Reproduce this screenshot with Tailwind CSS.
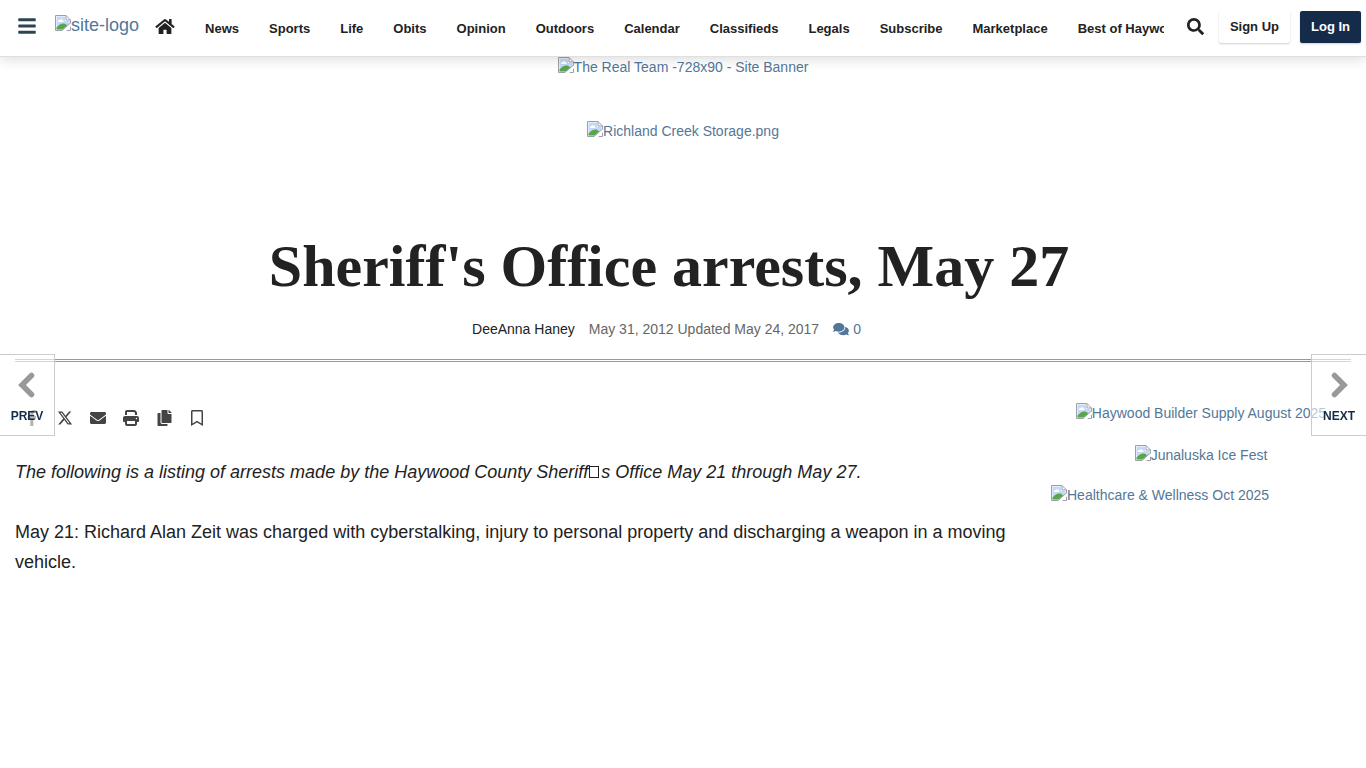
<!DOCTYPE html>
<html lang="en">

<head>
  <meta charset="UTF-8" />
  <meta name="viewport" content="width=device-width, initial-scale=1.0" />
  <title>Sheriff's Office arrests, May 27</title>
  <script src="https://cdn.jsdelivr.net/npm/@tailwindcss/browser@4"></script>
</head>

<body class="bg-white text-[#222] text-sm leading-5 font-['Liberation_Sans',Arial,sans-serif]">

  <!-- Placeholder icon shared by the logo and the ads -->
  <svg class="hidden">
    <symbol id="placeholder" viewBox="0 0 16 16">
      <path d="M.5.5H11L15.5 5v10.500H.5z" fill="#fff" />
      <path d="M1.500 1.500H10V6h4.500v3L8.500 14.500h-7z" fill="#c6d8f8" />
      <path d="M3 7a1.500 1.500 0 0 1 1.500-2A2 2 0 0 1 8 5.500 1.300 1.300 0 0 1 8.500 7z" fill="#fff" />
      <path d="M1.500 14.500v-2C4 10 6 8.500 8 8.500s3 .5 4 2L7.500 14.500z" fill="#55a845" />
      <path d="M7 15.500 15.500 8M.5 15.500V.5H11L15.500 5v3.500M11 .5V5h4.500M.5 15.500H7M11.500 15.500h4V11.500" fill="none" stroke="#9a9fa8" />
      <path d="M8 16 16 8.500V11l-5 5z" fill="#fff" />
    </symbol>
  </svg>

  <!-- Header -->
  <header class="relative z-20 flex items-start h-[57px] bg-white border-b border-[#e0e0e0] shadow-[0_2px_12px_rgba(0,0,0,0.15)]">
    <button type="button" aria-label="Menu" class="ml-[18px] mt-4 shrink-0">
      <svg class="w-[18px] h-5" viewBox="0 0 448 512" fill="#2c4453"><path d="M16 132h416c8.837 0 16-7.163 16-16V76c0-8.837-7.163-16-16-16H16C7.163 60 0 67.163 0 76v40c0 8.837 7.163 16 16 16zm0 160h416c8.837 0 16-7.163 16-16v-40c0-8.837-7.163-16-16-16H16c-8.837 0-16 7.163-16 16v40c0 8.837 7.163 16 16 16zm0 160h416c8.837 0 16-7.163 16-16v-40c0-8.837-7.163-16-16-16H16c-8.837 0-16 7.163-16 16v40c0 8.837 7.163 16 16 16z" /></svg>
    </button>
    <a href="#" class="flex ml-[19px] mt-[15px] shrink-0 text-lg leading-5 text-[#537799]">
      <svg class="w-4 h-4"><use href="#placeholder" /></svg>site-logo
    </a>
    <a href="#" aria-label="Home" class="ml-4 mt-[18px] shrink-0">
      <svg class="w-5 h-[17px]" viewBox="0 0 576 512" fill="#222"><path d="M280.37 148.26L96 300.11V464a16 16 0 0 0 16 16l112.06-.29a16 16 0 0 0 15.92-16V368a16 16 0 0 1 16-16h64a16 16 0 0 1 16 16v95.64a16 16 0 0 0 16 16.05L464 480a16 16 0 0 0 16-16V300L295.67 148.26a12.19 12.19 0 0 0-15.3 0zM571.6 251.47L488 182.56V44.05a12 12 0 0 0-12-12h-56a12 12 0 0 0-12 12v72.61L318.47 43a48 48 0 0 0-61 0L4.34 251.47a12 12 0 0 0-1.6 16.9l25.5 31A12 12 0 0 0 45.15 301l235.22-193.74a12.19 12.19 0 0 1 15.3 0L530.9 301a12 12 0 0 0 16.9-1.6l25.5-31a12 12 0 0 0-1.7-16.93z" /></svg>
    </a>
    <nav class="flex-1 min-w-0 ml-[15px] mt-[19px] overflow-hidden">
      <ul class="flex text-[13px] font-bold whitespace-nowrap">
        <li><a href="#" class="block px-[15px]">News</a></li>
        <li><a href="#" class="block px-[15px]">Sports</a></li>
        <li><a href="#" class="block px-[15px]">Life</a></li>
        <li><a href="#" class="block px-[15px]">Obits</a></li>
        <li><a href="#" class="block px-[15px]">Opinion</a></li>
        <li><a href="#" class="block px-[15px]">Outdoors</a></li>
        <li><a href="#" class="block px-[15px]">Calendar</a></li>
        <li><a href="#" class="block px-[15px]">Classifieds</a></li>
        <li><a href="#" class="block px-[15px]">Legals</a></li>
        <li><a href="#" class="block px-[15px]">Subscribe</a></li>
        <li><a href="#" class="block px-[15px]">Marketplace</a></li>
        <li><a href="#" class="block px-[15px]">Best of Haywood</a></li>
      </ul>
    </nav>
    <button type="button" aria-label="Search" class="ml-[23px] mt-[18px] shrink-0">
      <svg class="w-[17px] h-[17px]" viewBox="0 0 512 512" fill="#222"><path d="M505 442.7L405.3 343c-4.5-4.5-10.6-7-17-7H372c27.6-35.3 44-79.7 44-128C416 93.1 322.9 0 208 0S0 93.1 0 208s93.1 208 208 208c48.3 0 92.7-16.4 128-44v16.3c0 6.4 2.5 12.5 7 17l99.7 99.7c9.4 9.4 24.6 9.4 33.9 0l28.3-28.3c9.4-9.4 9.4-24.6.1-34zM208 336c-70.7 0-128-57.2-128-128 0-70.7 57.2-128 128-128 70.7 0 128 57.2 128 128 0 70.7-57.2 128-128 128z" /></svg>
    </button>
    <div class="flex gap-[10px] ml-[15px] mr-[5px] mt-[11px] shrink-0 text-[13px] font-bold">
      <a href="#" class="h-8 px-[11px] leading-8 rounded-xs bg-white shadow-[0_1px_2px_rgba(0,0,0,0.2)]">Sign Up</a>
      <a href="#" class="h-8 px-[11px] leading-8 rounded-xs bg-[#142c4a] text-white shadow-[0_1px_2px_rgba(0,0,0,0.2)]">Log In</a>
    </div>
  </header>

  <!-- Top banners -->
  <div class="flex flex-col items-center gap-11 text-[#537799]">
    <a href="#" class="flex"><svg class="w-4 h-4"><use href="#placeholder" /></svg>The Real Team -728x90 - Site Banner</a>
    <a href="#" class="flex"><svg class="w-4 h-4"><use href="#placeholder" /></svg>Richland Creek Storage.png</a>
  </div>

  <main class="px-[15px]">
    <!-- Headline -->
    <div class="pt-[92px] pb-5 pr-7 text-center">
      <h1 class="font-['Liberation_Serif','Times_New_Roman',serif] text-[60px] leading-[66px] font-bold">Sheriff's Office arrests, May 27</h1>
      <div class="flex justify-center pr-[5px] mt-5">
        <a href="#">DeeAnna Haney</a>
        <span class="ml-[14px] text-[#666]">May 31, 2012 Updated May 24, 2017</span>
        <a href="#" class="flex items-center gap-1 ml-[14px] text-[#537799]">
          <svg class="w-4 h-[14px]" viewBox="0 0 576 512" fill="currentColor"><path d="M416 192c0-88.4-93.1-160-208-160S0 103.6 0 192c0 34.3 14.1 65.9 38 92-13.4 30.2-35.5 54.2-35.8 54.5-2.2 2.3-2.8 5.7-1.5 8.700S4.8 352 8 352c36.6 0 66.9-12.3 88.7-25 32.2 15.7 70.3 25 111.3 25 114.9 0 208-71.6 208-160zm122 220c23.9-26 38-57.7 38-92 0-66.9-53.5-124.2-129.3-148.100.9 6.6 1.3 13.3 1.3 20.1 0 105.9-107.7 192-240 192-10.8 0-21.3-.8-31.7-1.9C207.8 439.6 281.8 480 368 480c41 0 79.1-9.2 111.3-25 21.8 12.7 52.1 25 88.7 25 3.2 0 6.1-1.9 7.3-4.8 1.3-2.9.7-6.3-1.5-8.700-.3-.3-22.4-24.2-35.8-54.500z" /></svg>0
        </a>
      </div>
    </div>
    <hr class="h-[3px] border-y border-[#999]">

    <div class="flex justify-between pt-[41px]">
      <article class="w-[1006px] shrink min-w-0">
        <!-- Share icons -->
        <div class="flex gap-[17px] pl-[9px] pt-[7px] text-[#444]">
          <a href="#" aria-label="Facebook"><svg class="w-4 h-4" viewBox="0 0 320 512" fill="currentColor"><path d="M279.14 288l14.22-92.66h-88.91v-60.13c0-25.35 12.42-50.06 52.24-50.06h40.42V6.26S260.43 0 225.36 0c-73.22 0-121.08 44.38-121.08 124.72v70.62H22.89V288h81.39v224h100.17V288z" /></svg></a>
          <a href="#" aria-label="X"><svg class="w-4 h-4" viewBox="-1 -1 18 18" fill="currentColor"><path d="M12.6.75h2.454l-5.36 6.142L16 15.25h-4.937l-3.867-5.07-4.425 5.07H.316l5.733-6.57L0 .75h5.063l3.495 4.633L12.601.75Zm-.86 13.028h1.36L4.323 2.145H2.865z" /></svg></a>
          <a href="#" aria-label="Email"><svg class="w-4 h-4" viewBox="0 0 512 512" fill="currentColor"><path d="M502.3 190.8c3.9-3.1 9.7-.2 9.7 4.700V400c0 26.5-21.5 48-48 48H48c-26.5 0-48-21.5-48-48V195.6c0-5 5.7-7.8 9.7-4.7 22.4 17.4 52.1 39.5 154.1 113.6 21.1 15.4 56.7 47.8 92.2 47.6 35.7.3 72-32.8 92.3-47.6 102-74.1 131.6-96.3 154-113.700zM256 320c23.2.4 56.6-29.2 73.4-41.4 132.7-96.3 142.8-104.7 173.4-128.7 5.8-4.5 9.2-11.5 9.2-18.9v-19c0-26.5-21.5-48-48-48H48c-26.5 0-48 21.5-48 48v19c0 7.4 3.4 14.3 9.2 18.9 30.6 23.9 40.7 32.4 173.4 128.7 16.8 12.2 50.2 41.8 73.4 41.400z" /></svg></a>
          <a href="#" aria-label="Print"><svg class="w-4 h-4" viewBox="0 0 512 512" fill="currentColor"><path d="M128 0C92.700 0 64 28.700 64 64v96h64V64h226.700L384 93.300V160h64V93.300c0-17-6.700-33.300-18.700-45.300L400 18.700C388 6.700 371.700 0 354.700 0H128zM384 352v96H128v-96H384zm64 32h32c17.700 0 32-14.300 32-32V256c0-35.300-28.700-64-64-64H64c-35.300 0-64 28.700-64 64v96c0 17.700 14.300 32 32 32H64v64c0 35.300 28.700 64 64 64H384c35.300 0 64-28.700 64-64V384zM432 248a24 24 0 1 1 0 48 24 24 0 1 1 0-48z" /></svg></a>
          <button type="button" aria-label="Copy article link"><svg class="w-4 h-4" viewBox="-48 0 512 512" fill="currentColor"><path d="M320 448v40c0 13.255-10.745 24-24 24H24c-13.255 0-24-10.745-24-24V120c0-13.255 10.745-24 24-24h72v296c0 30.879 25.121 56 56 56h168zm0-344V0H152c-13.255 0-24 10.745-24 24v368c0 13.255 10.745 24 24 24h272c13.255 0 24-10.745 24-24V128H344c-13.2 0-24-10.8-24-24zm120.971-31.029L375.029 7.029A24 24 0 0 0 358.059 0H352v96h96v-6.059a24 24 0 0 0-7.029-16.97z" /></svg></button>
          <button type="button" aria-label="Save"><svg class="w-4 h-4" viewBox="0 0 384 512" fill="currentColor"><path d="M336 0H48C21.49 0 0 21.49 0 48v464l192-112 192 112V48c0-26.51-21.49-48-48-48zm0 428.43l-144-84-144 84V54a6 6 0 0 1 6-6h276c3.314 0 6 2.683 6 5.996V428.43z" /></svg></button>
        </div>

        <!-- Story -->
        <div class="mt-[31px] space-y-[30px] text-lg leading-[30px]">
          <p class="italic">The following is a listing of arrests made by the Haywood County Sheriff<span class="inline-block w-[10px] h-3 ml-px mr-0.5 border border-[#222]"></span>s Office May 21 through May 27.</p>
          <p>May 21: Richard Alan Zeit was charged with cyberstalking, injury to personal property and discharging a weapon in a moving vehicle.</p>
        </div>
      </article>

      <!-- Sidebar ads -->
      <aside class="flex flex-col items-center gap-5 w-[300px] shrink-0 text-[#537799]">
        <a href="#" class="flex"><svg class="w-4 h-4"><use href="#placeholder" /></svg>Haywood Builder Supply August 2025</a>
        <a href="#" class="flex mt-0.5"><svg class="w-4 h-4"><use href="#placeholder" /></svg>Junaluska Ice Fest</a>
        <a href="#" class="flex self-start"><svg class="w-4 h-4"><use href="#placeholder" /></svg>Healthcare &amp; Wellness Oct 2025</a>
      </aside>
    </div>
  </main>

  <!-- Previous / next story -->
  <a href="#" class="fixed z-10 left-0 top-[354px] w-[55px] h-[82px] flex flex-col items-center pt-[14px] bg-white/60 border border-l-0 border-[#ccc] text-xs font-bold text-[#142c4a]">
    <svg class="w-5 h-8" viewBox="0 0 20 32" fill="none" stroke="#999" stroke-width="5.500" stroke-linecap="round"><path d="M14.500 6.500 5 16l9.500 9.500" /></svg>
    <span class="mt-[7px]">PREV</span>
  </a>
  <a href="#" class="fixed z-10 right-0 top-[354px] w-[55px] h-[82px] flex flex-col items-center pt-[14px] bg-white/60 border border-r-0 border-[#ccc] text-xs font-bold text-[#142c4a]">
    <svg class="w-5 h-8" viewBox="0 0 20 32" fill="none" stroke="#999" stroke-width="5.500" stroke-linecap="round"><path d="M5.500 6.500 15 16l-9.500 9.500" /></svg>
    <span class="mt-[7px]">NEXT</span>
  </a>

</body>

</html>
